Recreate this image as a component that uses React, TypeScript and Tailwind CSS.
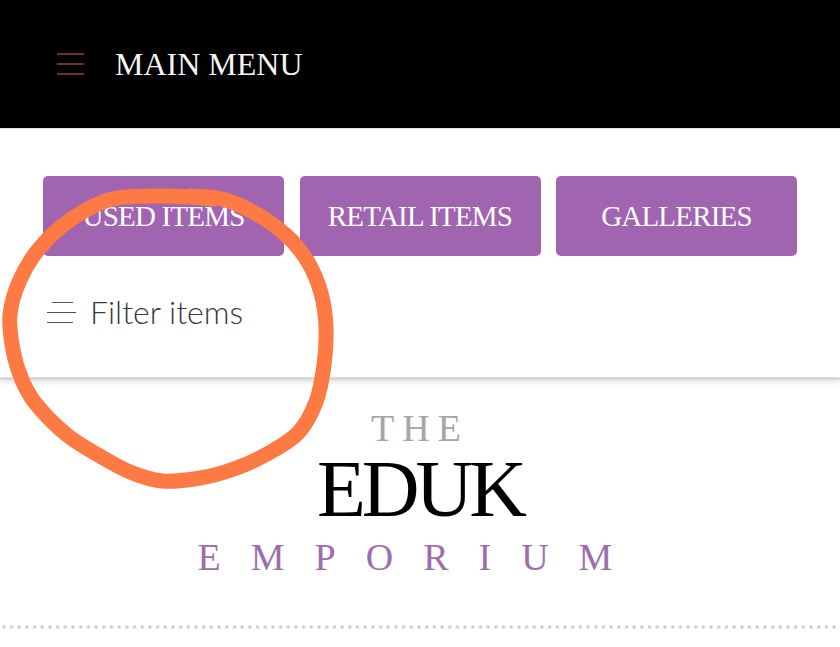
import React from "react";

const serif = "font-['Liberation_Serif','Times_New_Roman',serif]";

// hand-drawn marker loop that sits over the filter link
const loopPoints: [number, number][] = [
  [213, 199], [167, 196], [112, 199], [70, 220], [38, 250], [19, 282],
  [10, 315], [13, 350], [22, 380], [36, 404], [67, 435], [100, 456],
  [130, 472], [162, 481], [200, 478], [234, 469], [267, 454], [298, 433],
  [316, 402], [324, 365], [326, 327], [321, 293], [308, 262], [287, 236],
  [255, 213], [222, 199], [190, 196],
];

const smoothPath = (pts: [number, number][]) => {
  let d = `M${pts[0][0]},${pts[0][1]}`;
  for (let i = 0; i < pts.length - 1; i++) {
    const p0 = pts[i - 1] || pts[i];
    const p1 = pts[i];
    const p2 = pts[i + 1];
    const p3 = pts[i + 2] || p2;
    const c1x = p1[0] + (p2[0] - p0[0]) / 6;
    const c1y = p1[1] + (p2[1] - p0[1]) / 6;
    const c2x = p2[0] - (p3[0] - p1[0]) / 6;
    const c2y = p2[1] - (p3[1] - p1[1]) / 6;
    d += ` C${c1x},${c1y} ${c2x},${c2y} ${p2[0]},${p2[1]}`;
  }
  return d;
};

const NavButton = ({ label }: { label: string }) => (
  <button
    className={`h-[80px] rounded-[5px] bg-[#a064b0] text-[29px] leading-none tracking-[-0.8px] text-white ${serif}`}
  >
    {label}
  </button>
);

export default function App() {
  return (
    <div className="relative h-[647px] w-[840px] overflow-hidden bg-white">
      <header className="flex h-[129px] items-center border-b border-[#e6e6e6] bg-black pl-[57px]">
        <div className="flex w-[27px] flex-col gap-[8.5px]">
          <span className="h-[1.5px] w-full bg-[#6b3434]" />
          <span className="h-[1.5px] w-full bg-[#6b3434]" />
          <span className="h-[1.5px] w-full bg-[#6b3434]" />
        </div>
        <span className={`ml-[31px] text-[32px] leading-none text-[#f4f4f4] ${serif}`}>
          MAIN MENU
        </span>
      </header>

      <section className="relative z-10 border-b-[3px] border-[#d8d8d8] bg-white px-[43px] pt-[47px] pb-[45px] shadow-[0_2px_5px_rgba(0,0,0,0.12)]">
        <div className="grid grid-cols-3 gap-[15.5px]">
          <NavButton label="USED ITEMS" />
          <NavButton label="RETAIL ITEMS" />
          <NavButton label="GALLERIES" />
        </div>
        <div className="mt-[36px] flex h-[40px] items-center pl-[4px]">
          <div className="flex w-[29px] flex-col gap-[9px]">
            <span className="ml-[5px] h-px w-[21px] bg-[#555]" />
            <span className="h-px w-[29px] bg-[#555]" />
            <span className="h-px w-[26px] bg-[#555]" />
          </div>
          <span className="ml-[14px] font-['Lato',sans-serif] text-[32px] font-light leading-none text-[#3a3a3a]">
            Filter items
          </span>
        </div>
      </section>

      <div className="flex flex-col items-center pt-[29px]">
        <span className={`text-[38px] leading-none tracking-[8px] text-[#a6a6a6] ${serif}`}>
          THE
        </span>
        <span className={`mt-[2px] text-[80px] leading-none tracking-[-4px] text-black ${serif}`}>
          EDUK
        </span>
        <span className={`mt-[9px] text-[38px] leading-none tracking-[30px] text-[#9d6dad] ${serif}`}>
          EMPORIUM
        </span>
      </div>

      <div className="mt-[49px] h-[4px] w-full bg-[radial-gradient(circle,#cdcdcd_1.4px,transparent_1.9px)] bg-[length:7.7px_4px]" />

      <svg
        className="pointer-events-none absolute left-0 top-0 z-20"
        width={840}
        height={647}
        viewBox="0 0 840 647"
      >
        <path
          d={smoothPath(loopPoints)}
          fill="none"
          stroke="#fd7a45"
          strokeWidth={15}
          strokeLinecap="round"
          strokeLinejoin="round"
        />
      </svg>
    </div>
  );
}
